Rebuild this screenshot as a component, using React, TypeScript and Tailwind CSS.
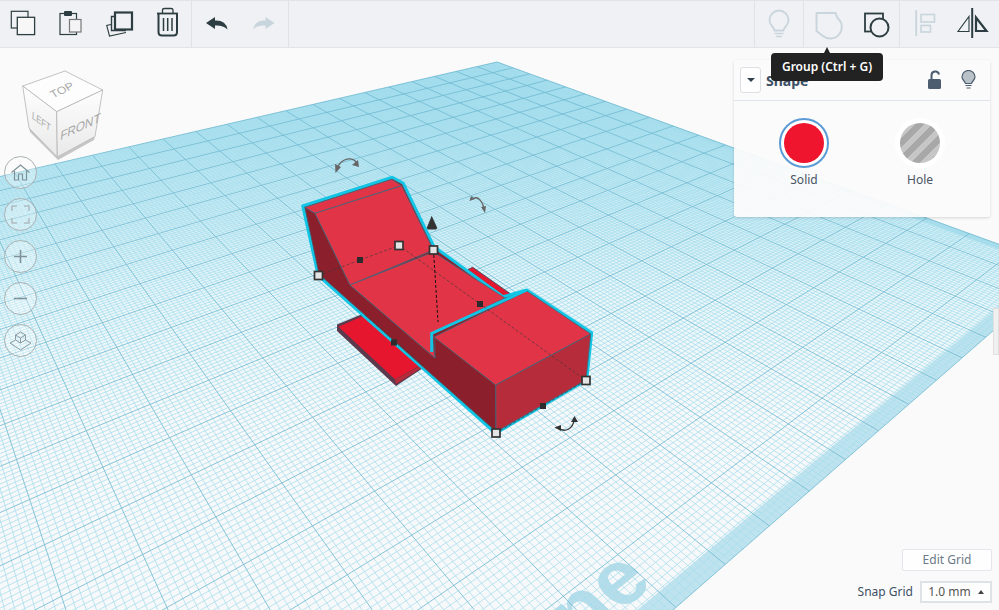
const ax = 497, ay = 62, v1x = 1590, v2x = -197, hy = -190, alpha = 0.018, beta = 0.0225

const pt = (u: number, v: number) => {
  const w = 1 - alpha * u - beta * v
  const x = (ax - alpha * u * v1x - beta * v * v2x) / w
  const y = (ay - alpha * u * hy - beta * v * hy) / w
  return `${x.toFixed(1)} ${y.toFixed(1)}`
}

const quad = (u0: number, v0: number, u1: number, v1: number) =>
  `M${pt(u0, v0)}L${pt(u1, v0)}L${pt(u1, v1)}L${pt(u0, v1)}Z`

const gridPaths = () => {
  let minor = ""
  let major = ""
  for (let k = 0; k <= 200; k++) {
    const t = k / 10
    const seg = `M${pt(t, 0)}L${pt(t, 20)}M${pt(0, t)}L${pt(20, t)}`
    if (k % 10 === 0) major += seg
    else minor += seg
  }
  return { minor, major }
}

const dark = "#2d3e42"
const off = "#c9d5dc"

const Workplane = () => {
  const { minor, major } = gridPaths()
  return (
    <svg className="absolute inset-0 w-[999px] h-[562px]" viewBox="0 48 999 562">
      <defs>
        <linearGradient id="plateTint" gradientUnits="userSpaceOnUse" x1="0" y1="62" x2="0" y2="420">
          <stop offset="0" stopColor="#8fd6e8" />
          <stop offset="0.3" stopColor="#c3e9f2" />
          <stop offset="0.65" stopColor="#e9f6f9" />
          <stop offset="1" stopColor="#f7f8f9" />
        </linearGradient>
      </defs>
      <path d={quad(0, 0, 20, 20)} fill="url(#plateTint)" />
      <text
        transform="matrix(.781 -.624 .728 .685 655 584)"
        textAnchor="end"
        fontSize="82"
        fontWeight="700"
        fontFamily="'Liberation Sans', sans-serif"
        fill="#b4dce9"
      >
        Workplane
      </text>
      <path d={quad(0, 19.72, 20, 20)} fill="#bfe3ee" />
      <path d={quad(0, 0, 0.25, 20)} fill="#a8dcea" />
      <path d={minor} fill="none" stroke="#a5deed" strokeWidth="0.75" />
      <path d={major} fill="none" stroke="#72bcd3" strokeWidth="0.85" />
    </svg>
  )
}

const Handle = ({ x, y }: { x: number; y: number }) => (
  <rect x={x - 4} y={y - 4} width="8" height="8" fill="#e4e4e4" stroke="#333" strokeWidth="1.7" />
)

const Dot = ({ x, y }: { x: number; y: number }) => <rect x={x - 3} y={y - 3} width="6" height="6" fill="#2c2c2c" />

const Model = () => (
  <svg className="absolute inset-0 w-[999px] h-[562px]" viewBox="0 48 999 562">
    {/* back piece */}
    <polygon points="468,269.5 472.7,267.3 512,295 503,297" fill="#e6162e" stroke="#5a4a5e" strokeWidth="1" />
    {/* plate */}
    <polygon points="337,324.5 365,313 423,363 423,368 396,386 337,331" fill="#5b3a4e" />
    <polygon points="338.5,326.7 365,315 423,364 395,379.3" fill="#e6162e" />
    <polygon points="395,379.5 423,364.5 423,367 396,384" fill="#b72c3a" />
    {/* selection outline */}
    <polygon
      points="302.7,206 392.3,177.3 403.3,183.3 434,246.7 503,296.7 526.7,290 591.7,332.7 586.7,380 495.7,433.3 426.7,371.7 318.3,275.7"
      fill="#8b1f2b"
      stroke="#12c5e5"
      strokeWidth="3"
      strokeLinejoin="round"
    />
    <polygon points="305,207.3 315,213.3 350,285 435,358 435,337 495.7,385 495.7,431 426.7,370 319,274" fill="#8b1f2b" stroke="#4a5a6a" strokeWidth="0.8" />
    {/* ramp + flat */}
    <polygon points="305,207.3 391.7,179.3 401.7,185.7 315,213.3" fill="#e23447" stroke="#3f6a7d" strokeWidth="0.8" />
    <polygon points="315,213.3 401.7,185.7 433.3,250 350,285" fill="#e23447" stroke="#3f6a7d" strokeWidth="0.8" />
    <polygon points="350,285 433.3,252 505,298 431.7,333.5 435,358" fill="#e23447" stroke="#3f6a7d" strokeWidth="0.8" />
    {/* box */}
    <polygon points="434,337 526.7,291 590.7,334 495.7,385" fill="#e23447" stroke="#3f6a7d" strokeWidth="0.8" />
    <polygon points="495.7,385 590.7,334 586,380 496,432" fill="#b72c3a" stroke="#3f6a7d" strokeWidth="0.8" />
    <polyline points="431.7,352 431.7,333.5 526.7,290" fill="none" stroke="#12c5e5" strokeWidth="3" />
    {/* dashed */}
    <g fill="none" stroke="#3a3a3a" strokeWidth="0.8" strokeDasharray="3 2" opacity="0.8">
      <path d="M318.5 275.5L399 245.5L586 380.5" />
      <path d="M365 315L423 365" />
      <path d="M496 433L586 380.5" />
    </g>
    <path d="M433.5 250L438 322" fill="none" stroke="#111" strokeWidth="1" strokeDasharray="3 2" />
    <Dot x={360} y={260} />
    <Dot x={480} y={304} />
    <Dot x={394} y={342.5} />
    <Dot x={543} y={406} />
    <Handle x={318.5} y={275.5} />
    <Handle x={399} y={245.5} />
    <Handle x={433.5} y={250} />
    <Handle x={586} y={380.5} />
    <Handle x={496} y={433} />
    {/* height cone */}
    <polygon points="431.7,215.7 426.7,228 428,229.5 436,229.5 437.3,228" fill="#333" />
    {/* rotate arrows */}
    <g fill="none" stroke="#666" strokeWidth="1.3">
      <path d="M337 168C342 158 352 156 357 163" />
      <path d="M473 199C478 195 483 202 484 209" />
    </g>
    <polygon points="335.5,173 335,164 341,167" fill="#666" />
    <polygon points="359,167 352,165 358,160" fill="#666" />
    <polygon points="469.5,201 471,196 475,199" fill="#666" />
    <polygon points="485,213 481,207 486,206" fill="#666" />
    <path d="M558 428C565 433 573 429 574 420" fill="none" stroke="#333" strokeWidth="1.3" />
    <polygon points="554.5,427.5 561,425 561,431" fill="#333" />
    <polygon points="574.5,416 571,422 578,422" fill="#333" />
  </svg>
)

const ViewCube = () => (
  <svg className="absolute left-[18px] top-[18px] w-[90px] h-[100px]" viewBox="18 66 90 100">
    <defs>
      <linearGradient id="cubeLeft" x1="0" y1="0" x2="0" y2="1">
        <stop offset="0" stopColor="#fefefe" />
        <stop offset="1" stopColor="#e9e9e9" />
      </linearGradient>
    </defs>
    <polygon points="29,128 57.3,157 95,136.5 94,140 58,160 30,132" fill="#c6c6c6" />
    <polygon points="22.7,86 65,71 102.7,90 56.7,111.7" fill="#fdfdfd" stroke="#b4b4b4" strokeWidth="0.8" />
    <polygon points="22.7,86 56.7,111.7 57.3,157 29,128" fill="url(#cubeLeft)" stroke="#b4b4b4" strokeWidth="0.8" />
    <polygon points="56.7,111.7 102.7,90 95,136.5 57.3,157" fill="url(#cubeLeft)" stroke="#b4b4b4" strokeWidth="0.8" />
    <g fontFamily="'Liberation Sans', sans-serif" fill="#a8a8a8" textAnchor="middle" fontWeight="400">
      <text transform="matrix(.9 -.42 .5 .75 64 93)" fontSize="12">TOP</text>
      <text transform="matrix(.75 .55 -.1 1 41 125)" fontSize="10">LEFT</text>
      <text transform="matrix(.9 -.42 -.1 1 80 131)" fontSize="13">FRONT</text>
    </g>
  </svg>
)

const NavButton = ({ children }: { children: React.ReactNode }) => (
  <div className="w-[33px] h-[33px] rounded-full border border-[#a9b1b4] bg-white/30 flex items-center justify-center">
    {children}
  </div>
)

const NavButtons = () => (
  <div className="absolute left-[3.5px] top-[108px] flex flex-col gap-[9px]">
    <NavButton>
      <svg width="21" height="21" viewBox="0 0 21 21" fill="none" stroke="#7f9299" strokeWidth="1.2">
        <path d="M1.5 10.5L10.5 3L19.5 10.5M4.5 9V18H8.5V12H12.5V18H16.5V9" />
      </svg>
    </NavButton>
    <NavButton>
      <svg width="19" height="19" viewBox="0 0 19 19" fill="none" stroke="#aebdc2" strokeWidth="1.6">
        <path d="M1 6V1H6M13 1H18V6M18 13V18H13M6 18H1V13" />
      </svg>
    </NavButton>
    <NavButton>
      <svg width="15" height="15" viewBox="0 0 15 15" fill="none" stroke="#7f9299" strokeWidth="1.6">
        <path d="M7.5 1V14M1 7.5H14" />
      </svg>
    </NavButton>
    <NavButton>
      <svg width="15" height="15" viewBox="0 0 15 15" fill="none" stroke="#7f9299" strokeWidth="1.6">
        <path d="M1 7.5H14" />
      </svg>
    </NavButton>
    <NavButton>
      <svg width="23" height="21" viewBox="0 0 23 21" fill="none" stroke="#8c9ca2" strokeWidth="1">
        <path d="M11.5 2L16.5 5V10L11.5 13L6.5 10V5ZM6.5 5L11.5 8L16.5 5M11.5 8V13M6.5 10L1 13L11.5 20L22 13L16.5 10" />
      </svg>
    </NavButton>
  </div>
)

const ToolIcon = ({ x, children }: { x: number; children: React.ReactNode }) => (
  <svg className="w-[47.5px] h-[46px] shrink-0" viewBox={`${x} 1 47.5 46`} fill="none">
    {children}
  </svg>
)

const Toolbar = () => (
  <div className="h-[48px] shrink-0 flex bg-[#f0f1f4] border-t border-t-[#dfe3ea] border-b border-b-[#e1e4e9]">
    <div className="w-[192px] flex border-r border-[#dfe3e8]">
      <ToolIcon x={0}>
        <rect x="11.3" y="11.3" width="16.7" height="16.7" stroke={dark} strokeWidth="1.2" />
        <rect x="17.3" y="17.3" width="17.3" height="17.3" fill="#f7f7f8" stroke={dark} strokeWidth="1.3" />
      </ToolIcon>
      <ToolIcon x={47.5}>
        <rect x="59.5" y="13.5" width="16.5" height="21" stroke={dark} strokeWidth="1.2" />
        <rect x="63.5" y="11" width="8" height="5" rx="1" fill={dark} />
        <rect x="69" y="19.5" width="11.5" height="12.5" fill="#f4f4f6" stroke="#777" strokeWidth="1.2" />
      </ToolIcon>
      <ToolIcon x={95}>
        <path d="M111 24.5L106.7 25.5L109.5 36L126 32.5" stroke={dark} strokeWidth="1.1" />
        <path d="M114 16.5H111.5V30.5H126" stroke={dark} strokeWidth="1.4" />
        <rect x="115" y="12.5" width="17" height="17" fill="#f0f1f4" stroke={dark} strokeWidth="2.2" />
      </ToolIcon>
      <ToolIcon x={142.5}>
        <path d="M156.5 13.5H177.5" stroke={dark} strokeWidth="1.8" />
        <path d="M162 13V10Q162 8.5 164 8.5H170.5Q172.5 8.5 172.5 10V13" stroke={dark} strokeWidth="1.3" />
        <path d="M158 14V32Q158 35.5 161.5 35.5H173Q176.5 35.5 176.5 32V14" stroke={dark} strokeWidth="2" />
        <path d="M163 18V31M167.2 18V31M171.5 18V31" stroke={dark} strokeWidth="1.5" />
      </ToolIcon>
    </div>
    <div className="w-[97px] flex border-r border-[#dfe3e8]">
      <ToolIcon x={192}>
        <path d="M206 23L215 17V20.5Q226 20 227.5 29.5Q223 25 215 25.5V29Z" fill={dark} />
      </ToolIcon>
      <ToolIcon x={240}>
        <path d="M274.5 23L265.5 17V20.5Q255 20 253 29.5Q257.5 25 265.5 25.5V29Z" fill={off} />
      </ToolIcon>
    </div>
    <div className="flex-1" />
    <div className="w-[49px] flex justify-center border-l border-[#dfe3e8]">
      <ToolIcon x={754}>
        <path d="M773.5 30.5C772.5 26 768.5 25.5 768.5 20A9.5 9.5 0 0 1 787.5 20C787.5 25.5 783.5 26 782.5 30.5Z" stroke={off} strokeWidth="1.8" />
        <path d="M773.5 33.5H782.5M775 36.5H781" stroke={off} strokeWidth="1.5" />
      </ToolIcon>
    </div>
    <div className="w-[97px] flex border-l border-r border-[#dfe3e8]">
      <ToolIcon x={803}>
        <path d="M815.5 13H834.5L836.5 18A9.5 9.5 0 0 1 822 36L815.5 31Z" stroke={off} strokeWidth="1.9" strokeLinejoin="round" />
      </ToolIcon>
      <ToolIcon x={852}>
        <rect x="865" y="13.5" width="18" height="18" stroke={dark} strokeWidth="1.8" />
        <circle cx="879.5" cy="27.5" r="9" fill="#f0f1f4" stroke={dark} strokeWidth="2" />
      </ToolIcon>
    </div>
    <div className="w-[99px] flex">
      <ToolIcon x={899.5}>
        <path d="M915.7 10V36" stroke={off} strokeWidth="1.8" />
        <rect x="920.5" y="14.5" width="13.5" height="7.5" stroke={off} strokeWidth="1.6" />
        <rect x="920.5" y="25.5" width="9.5" height="6.5" stroke={off} strokeWidth="1.6" />
      </ToolIcon>
      <ToolIcon x={947.5}>
        <path d="M971.7 8V38" stroke={dark} strokeWidth="2" />
        <path d="M968.5 16.5V31.5H957.5Z" stroke={dark} strokeWidth="1.1" />
        <path d="M975.5 17.5V31H986Z" stroke={dark} strokeWidth="2.2" />
      </ToolIcon>
    </div>
  </div>
)

const Tooltip = () => (
  <div className="absolute left-[771px] top-[5px] w-[112px] h-[28px] rounded-[4px] bg-[#222222] flex items-center justify-center text-white text-[12px] font-semibold whitespace-nowrap">
    <span className="absolute top-[-6px] left-[53px] w-0 h-0 border-x-[3px] border-x-transparent border-b-[6px] border-b-[#222222]" />
    Group (Ctrl + G)
  </div>
)

const ShapePanel = () => (
  <div className="absolute left-[734px] top-[12px] w-[256px] h-[157px] rounded-[3px] bg-[#fbfbfb]/95 shadow-[0_1px_3px_rgba(0,0,0,0.15)]">
    <div className="h-[41px] flex items-center pl-[6px] pr-[14px] border-b border-[#dfe3ea]">
      <div className="w-[21px] h-[26px] rounded-[3px] border border-[#dcdfe3] bg-white flex items-center justify-center">
        <span className="w-0 h-0 border-x-[4px] border-x-transparent border-t-[4px] border-t-[#33414d]" />
      </div>
      <span className="ml-[5px] text-[14px] font-bold text-[#3d5166]">Shape</span>
      <div className="flex-1" />
      <svg width="16" height="20" viewBox="0 0 16 20" fill="none" className="mr-[18px]">
        <path d="M4.5 9V5.5A3.8 3.8 0 0 1 12 4.5" stroke="#4b5d6e" strokeWidth="2" />
        <rect x="1" y="9" width="13" height="10" rx="1.5" fill="#4b5d6e" />
      </svg>
      <svg width="15" height="20" viewBox="0 0 15 20" fill="none">
        <path d="M4.5 13.5C4 11 1 10 1 7A6.5 6.5 0 0 1 14 7C14 10 11 11 10.5 13.5Z" fill="#b9c2c9" stroke="#4b5d6e" strokeWidth="1.2" />
        <path d="M4.5 15.5H10.5M5.5 18H9.5" stroke="#4b5d6e" strokeWidth="1.2" />
      </svg>
    </div>
    <div className="flex gap-[16px] pt-[17px] pl-[20px]">
      <div className="w-[100px] flex flex-col items-center">
        <div className="w-[50px] h-[50px] rounded-full border-2 border-[#5b9bd5] bg-white flex items-center justify-center">
          <div className="w-[40px] h-[40px] rounded-full bg-[#f0152f]" />
        </div>
        <span className="mt-[3px] text-[12px] text-[#4a5563]">Solid</span>
      </div>
      <div className="w-[100px] flex flex-col items-center">
        <div className="w-[50px] h-[50px] rounded-full bg-white flex items-center justify-center">
          <div className="w-[40px] h-[40px] rounded-full bg-[repeating-linear-gradient(135deg,#a8a8a8_0,#a8a8a8_6px,#c6c6c6_6px,#c6c6c6_12px)]" />
        </div>
        <span className="mt-[3px] text-[12px] text-[#4a5563]">Hole</span>
      </div>
    </div>
  </div>
)

const GridControls = () => (
  <div className="absolute right-[7px] bottom-[7px] flex flex-col items-end gap-[10px]">
    <div className="w-[90px] h-[22px] rounded-[2px] border border-[#e3e6ea] bg-white/70 flex items-center justify-center text-[12px] text-[#6b7a88]">
      Edit Grid
    </div>
    <div className="flex items-center gap-[7px]">
      <span className="text-[12px] text-[#3d5166]">Snap Grid</span>
      <div className="w-[72px] h-[22px] border-2 border-[#dfe2e6] bg-white/70 flex items-center justify-center gap-[7px] text-[12px] text-[#555555]">
        1.0 mm
        <span className="w-0 h-0 border-x-[3px] border-x-transparent border-b-[4px] border-b-[#444444]" />
      </div>
    </div>
  </div>
)

export default function App() {
  return (
    <div className="w-[999px] h-[610px] overflow-hidden flex flex-col bg-[#fafafa] font-['Noto_Sans',sans-serif]">
      <Toolbar />
      <div className="relative flex-1">
        <Workplane />
        <Model />
        <ViewCube />
        <NavButtons />
        <ShapePanel />
        <Tooltip />
        <GridControls />
        <div className="absolute right-0 top-[260px] w-[6px] h-[47px] bg-[#f0f0f0] border border-[#e0e0e0]" />
      </div>
    </div>
  )
}
